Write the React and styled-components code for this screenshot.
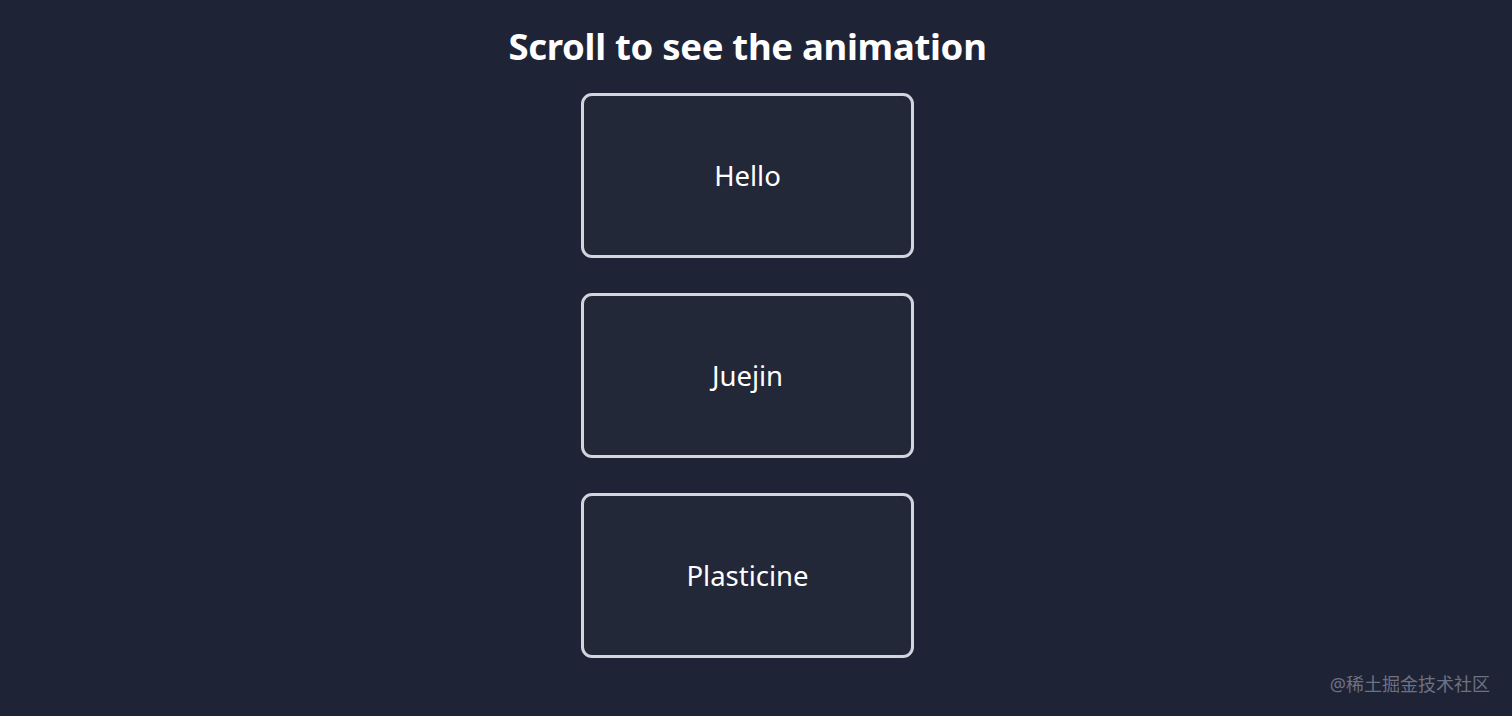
import React from 'react';
import styled, { createGlobalStyle } from 'styled-components';

const GlobalStyle = createGlobalStyle`
    html, body {
        margin: 0;
        padding: 0;
        background: #1f2336;
        height: 100%;
        overflow: hidden;
    }
    #root {
        min-height: 100%;
    }
`;

const Page = styled.div`
    position: relative;
    height: 716px;
    padding-right: 17px;
    box-sizing: border-box;
    display: flex;
    flex-direction: column;
    align-items: center;
    font-family: "Noto Sans", "Open Sans", sans-serif;
    color: #ffffff;
`;

const Title = styled.h1`
    margin: 22px 0 23px;
    font-size: 36.5px;
    font-weight: 700;
    line-height: 48px;
    letter-spacing: -0.3px;
`;

const CardList = styled.ul`
    list-style: none;
    margin: 0;
    padding: 0;
    display: flex;
    flex-direction: column;
    gap: 35px;
`;

const Card = styled.li`
    width: 333px;
    height: 165px;
    box-sizing: border-box;
    border: 3px solid #d3d5de;
    border-radius: 11px;
    background: #232839;
    display: flex;
    align-items: center;
    justify-content: center;
    font-size: 27.5px;
    font-weight: 400;
`;

const Watermark = styled.div`
    position: absolute;
    right: 22px;
    bottom: 20px;
    font-family: "Noto Sans", "Noto Sans CJK SC", sans-serif;
    font-size: 18px;
    color: #6d7182;
`;

const words = ['Hello', 'Juejin', 'Plasticine'];

const App = () => (
    <Page>
        <GlobalStyle />
        <Title>Scroll to see the animation</Title>
        <CardList>
            {words.map(word => (
                <Card key={word}>{word}</Card>
            ))}
        </CardList>
        <Watermark>@稀土掘金技术社区</Watermark>
    </Page>
);

export default App;
